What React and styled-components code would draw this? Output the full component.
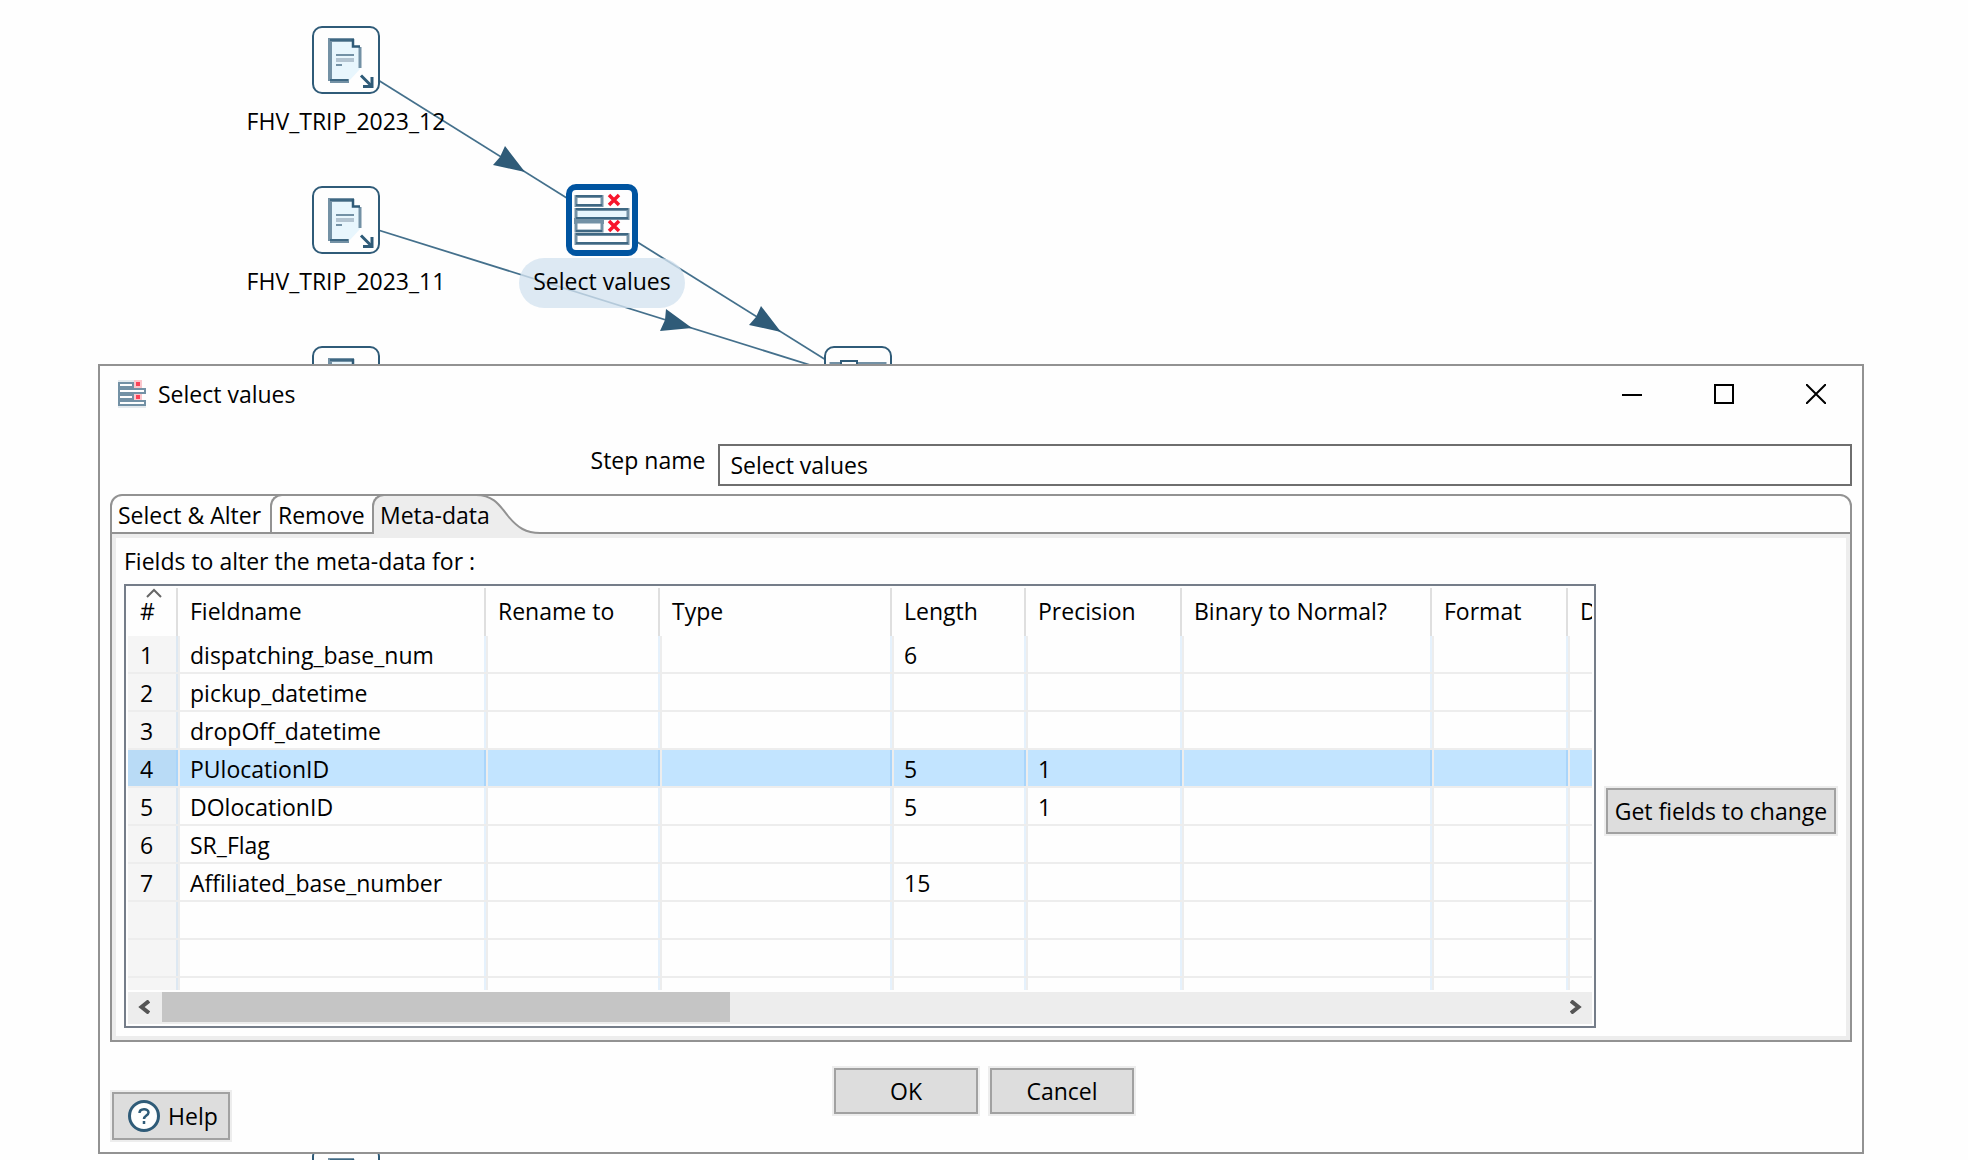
import React, { useState } from "react";
import styled, { createGlobalStyle, css } from "styled-components";

const INK = "#2f5b78";
const STEEL = "#7391a5";
const EDGE = "#929292";
const PANEL = "#ededed";

const GlobalStyle = createGlobalStyle`
  *, *::before, *::after { box-sizing: border-box; }
  html, body { margin: 0; background: #fefefe; }
  body, button, input, table {
    font-family: "Open Sans", "Noto Sans", sans-serif;
    font-size: 23px;
    line-height: 32px;
    color: #000;
  }
`;

/* ---------- transformation canvas ---------- */

const Canvas = styled.main`
  position: relative;
  min-height: 100vh;
  overflow: hidden;
`;

const Hops = styled.svg`
  position: absolute;
  inset: 0;
  width: 100%;
  height: 100%;
`;

const Step = styled.div`
  position: absolute;
  left: ${(p) => p.$x}px;
  top: ${(p) => p.$y}px;
  width: 0;
  display: flex;
  flex-direction: column;
  align-items: center;
`;

const StepTile = styled.div`
  flex: none;
  width: ${(p) => (p.$selected ? 72 : 68)}px;
  height: ${(p) => (p.$selected ? 72 : 68)}px;
  border: ${(p) => (p.$selected ? "6px solid #0054a0" : `2px solid ${INK}`)};
  border-radius: 10px;
  background: #fefefe;
  svg { display: block; }
`;

const StepLabel = styled.span`
  white-space: nowrap;
  margin-top: ${(p) => (p.$selected ? 2 : 11)}px;
  padding: ${(p) => (p.$selected ? "7px 14px 11px" : "0")};
  border-radius: 25px;
  background: ${(p) => (p.$selected ? "rgba(212, 227, 239, 0.78)" : "transparent")};
`;

function FileInputIcon() {
  return (
    <svg width="64" height="64" viewBox="2 2 64 64" aria-hidden="true">
      <path d="M18 14H42V21H48V43L37 55H18Z" fill="#e8f6fd" />
      <path d="M18 13V55" stroke={STEEL} strokeWidth="4" />
      <path d="M48 21V42" stroke={STEEL} strokeWidth="3" />
      <path d="M16 14H42M18 55H37" stroke={STEEL} strokeWidth="4" />
      <path d="M18 14H41M18 54H36" stroke={INK} strokeWidth="1.500" />
      <path d="M41 13V20.500H48" fill="none" stroke={INK} strokeWidth="2.500" />
      <path d="M24 29H42M24 39H30" stroke={STEEL} strokeWidth="2" />
      <path d="M24 34H42" stroke="#b3c4d1" strokeWidth="4" />
      <path d="M49 49.500L59 59.500" stroke={INK} strokeWidth="3" />
      <path d="M60 51V60.500H51" fill="none" stroke={INK} strokeWidth="3" />
    </svg>
  );
}

function SelectValuesIcon() {
  return (
    <svg width="60" height="60" viewBox="6 6 60 60" aria-hidden="true">
      <rect x="8" y="34" width="30" height="6" fill={STEEL} />
      <g fill="#fefefe" stroke={STEEL} strokeWidth="3">
        <rect x="10" y="12.500" width="26" height="9" />
        <rect x="10" y="25.500" width="52" height="9" fill="#e8f6fd" />
        <rect x="10" y="38" width="26" height="9" />
        <rect x="10" y="50.500" width="52" height="9" />
      </g>
      <path d="M10 12H36M10 21H36M10 25H62M10 34H62M10 47H36M10 50H62M10 59H62" stroke={INK} strokeWidth="1.500" />
      <path d="M43 11L53 21M53 11L43 21M43 37L53 47M53 37L43 47" stroke="#f8152c" strokeWidth="3.500" />
    </svg>
  );
}

function SelectValuesSmallIcon() {
  return (
    <svg width="28" height="28" viewBox="0 0 28 28" aria-hidden="true">
      <path d="M0 0H22V2H0ZM0 26H28V28H0Z" fill="#e4eaee" />
      <path d="M0 2H16V8H28V14H16V20H28V26H0Z" fill={STEEL} />
      <path d="M2 4H14V6H2ZM2 10H26V12H2ZM2 16H14V18H2ZM2 22H26V24H2Z" fill="#fefefe" />
      <path d="M16 0H24V8H16ZM16 14H24V20H16Z" fill="#fbc6cc" />
      <path d="M18 2H22V6H18ZM18 15H22V19H18Z" fill="#fb4257" />
    </svg>
  );
}

function MergeIcon() {
  return (
    <svg width="64" height="64" viewBox="2 2 64 64" aria-hidden="true">
      <path d="M7 17.500H61V54H7Z" fill="#fefefe" stroke={STEEL} strokeWidth="3" />
      <path d="M17 15H33V24H17Z" fill="#fefefe" stroke={INK} strokeWidth="2" />
    </svg>
  );
}

function CanvasStep({ x, y, label, selected, children }) {
  return (
    <Step $x={x} $y={y}>
      <StepTile $selected={selected}>{children}</StepTile>
      {label && <StepLabel $selected={selected}>{label}</StepLabel>}
    </Step>
  );
}

/* ---------- dialog ---------- */

const Dialog = styled.section`
  position: absolute;
  left: 98px;
  right: 104px;
  top: 364px;
  border: 2px solid ${EDGE};
  background: #fefefe;
`;

const TitleBar = styled.header`
  display: flex;
  align-items: center;
  height: 56px;
  padding-left: 18px;
`;

const Title = styled.h1`
  flex: 1;
  margin: 0 0 0 12px;
  font-size: inherit;
  font-weight: 400;
`;

const CaptionButton = styled.button`
  display: grid;
  place-items: center;
  width: 92px;
  height: 56px;
  padding: 0;
  border: 0;
  background: none;
`;

const StepNameRow = styled.div`
  display: flex;
  align-items: center;
  margin: 22px 10px 8px 8px;
`;

const StepNameLabel = styled.label`
  flex: 0 0 35%;
  padding: 0 13px 10px 0;
  text-align: right;
`;

const TextInput = styled.input`
  flex: 1;
  min-width: 0;
  height: 42px;
  padding: 0 10px;
  border: 2px solid #6e6e6e;
  border-radius: 0;
  background: #fefefe;
  outline: none;
`;

const TabFolder = styled.div`
  margin: 0 10px;
`;

const TabStrip = styled.div`
  display: flex;
  height: 40px;
  border: 2px solid ${EDGE};
  border-radius: 12px 12px 0 0;
`;

const Tab = styled.button`
  position: relative;
  height: 40px;
  margin-top: -2px;
  padding: 2px 6px 0;
  border: 0 solid ${EDGE};
  background: none;
  text-align: left;
  white-space: nowrap;
  width: ${(p) => p.$width}px;
  & + & {
    border-width: 2px 0 0 2px;
    border-top-left-radius: 12px;
    height: 38px;
  }
  ${(p) =>
    p.$active &&
    css`
      && { height: 40px; padding-bottom: 2px; background: ${PANEL}; }
    `}
`;

const TabText = styled.span`
  position: relative;
`;

const TabCurve = styled.svg`
  position: absolute;
  left: 100%;
  top: -2px;
`;

const TabPanel = styled.div`
  display: flex;
  flex-direction: column;
  border: 2px solid ${EDGE};
  border-top: 0;
  box-shadow: inset 0 0 0 4px ${PANEL};
  padding: 11px 12px 12px;
`;

const PanelCaption = styled.div`
  height: 39px;
`;

const PanelBody = styled.div`
  display: flex;
  align-items: center;
  gap: 8px;
`;

const GridFrame = styled.div`
  flex: 1;
  min-width: 0;
  border: 2px solid #757d89;
  padding: 2px;
`;

const GridViewport = styled.div`
  overflow: hidden;
`;

const Table = styled.table`
  width: 100%;
  table-layout: fixed;
  border-spacing: 0;
`;

const HeadCell = styled.th`
  position: relative;
  height: 48px;
  padding: 0 0 2px 12px;
  border-right: ${(p) => (p.$last ? 0 : 2)}px solid #dfdfdf;
  font-weight: 400;
  text-align: left;
  white-space: nowrap;
  overflow: hidden;
`;

const SortMark = styled.svg`
  position: absolute;
  left: 18px;
  top: 0;
`;

const Cell = styled.td`
  height: ${(p) => (p.$partial ? 12 : 38)}px;
  padding: ${(p) => (p.$partial ? 0 : 2)}px 0 0 ${(p) => (p.$index ? 12 : 10)}px;
  border: 0 solid ${PANEL};
  border-left-width: ${(p) => (p.$index ? 0 : 2)}px;
  border-bottom-width: ${(p) => (p.$partial ? 0 : 2)}px;
  background: ${(p) =>
    p.$selected ? (p.$index ? "#b9dbf6" : "#c2e4ff") : p.$index ? "#f5f5f5" : "#fefefe"};
  box-shadow: ${(p) =>
    p.$last ? "none" : `inset -2px 0 0 ${p.$selected ? "#a9d5fb" : p.$index ? "#dde8f2" : "#e5f1fc"}`};
  white-space: nowrap;
  overflow: hidden;
`;

const ScrollBar = styled.div`
  display: flex;
  height: 32px;
  margin-top: 2px;
  background: ${PANEL};
`;

const ScrollArrow = styled.button`
  display: grid;
  place-items: center;
  width: 34px;
  padding: 0 2px 2px 0;
  border: 0;
  background: none;
  & + div + & { padding: 0 0 2px 2px; }
`;

const ScrollTrack = styled.div`
  flex: 1;
`;

const ScrollThumb = styled.div`
  width: 568px;
  height: 30px;
  background: #c5c5c5;
`;

const PushButton = styled.button`
  display: flex;
  align-items: center;
  justify-content: center;
  gap: 8px;
  height: ${(p) => (p.$tall ? 52 : 50)}px;
  width: ${(p) => p.$width}px;
  padding: ${(p) => (p.$tall ? "0 0 0 4px" : "0")};
  border: 2px solid ${PANEL};
  box-shadow: inset 0 0 0 2px #a1a1a1;
  background: #ddd;
  white-space: nowrap;
`;

const SideColumn = styled.div`
  padding-top: 10px;
`;

const Footer = styled.footer`
  display: grid;
  grid-template-columns: 1fr auto 1fr;
  align-items: start;
  padding: 24px 10px 10px;
`;

const HelpSlot = styled.div`
  padding-top: 24px;
`;

const Actions = styled.div`
  display: flex;
  gap: 8px;
  padding-left: 6px;
`;

const COLUMNS = [
  { title: "#", width: 50 },
  { title: "Fieldname", width: 308 },
  { title: "Rename to", width: 174 },
  { title: "Type", width: 232 },
  { title: "Length", width: 134 },
  { title: "Precision", width: 156 },
  { title: "Binary to Normal?", width: 250 },
  { title: "Format", width: 136 },
  { title: "D" },
];

const FIELDS = [
  { name: "dispatching_base_num", length: "6" },
  { name: "pickup_datetime" },
  { name: "dropOff_datetime" },
  { name: "PUlocationID", length: "5", precision: "1" },
  { name: "DOlocationID", length: "5", precision: "1" },
  { name: "SR_Flag" },
  { name: "Affiliated_base_number", length: "15" },
  {},
  {},
  { partial: true },
];

const TABS = [
  { title: "Select & Alter", width: 158 },
  { title: "Remove", width: 102 },
  { title: "Meta-data", width: 104 },
];

function FieldGrid() {
  const [selected, setSelected] = useState(3);
  return (
    <GridFrame>
      <GridViewport>
        <Table aria-labelledby="grid-caption">
          <colgroup>
            {COLUMNS.map((c) => (
              <col key={c.title} width={c.width} />
            ))}
          </colgroup>
          <thead>
            <tr>
              {COLUMNS.map((c, i) => (
                <HeadCell key={c.title} $last={i === COLUMNS.length - 1}>
                  {i === 0 && (
                    <SortMark width="16" height="10" viewBox="0 0 16 10" aria-hidden="true">
                      <path d="M1 9L8 2L15 9" fill="none" stroke="#666" strokeWidth="2" />
                    </SortMark>
                  )}
                  {c.title}
                </HeadCell>
              ))}
            </tr>
          </thead>
          <tbody>
            {FIELDS.map((f, r) => {
              const values = [f.name ? r + 1 : "", f.name, "", "", f.length, f.precision, "", "", ""];
              return (
                <tr key={r} onClick={() => setSelected(r)}>
                  {values.map((v, i) => (
                    <Cell
                      key={i}
                      $index={i === 0}
                      $last={i === values.length - 1}
                      $partial={f.partial}
                      $selected={selected === r}
                    >
                      {v}
                    </Cell>
                  ))}
                </tr>
              );
            })}
          </tbody>
        </Table>
      </GridViewport>
      <ScrollBar>
        <ScrollArrow aria-label="Scroll left">
          <svg width="12" height="14" viewBox="0 0 12 14">
            <path d="M11 1L3.500 7L11 13" fill="none" stroke="#555" strokeWidth="4" />
          </svg>
        </ScrollArrow>
        <ScrollTrack>
          <ScrollThumb />
        </ScrollTrack>
        <ScrollArrow aria-label="Scroll right">
          <svg width="12" height="14" viewBox="0 0 12 14">
            <path d="M1 1L8.500 7L1 13" fill="none" stroke="#555" strokeWidth="4" />
          </svg>
        </ScrollArrow>
      </ScrollBar>
    </GridFrame>
  );
}

export default function App() {
  const [stepName, setStepName] = useState("Select values");
  return (
    <Canvas>
      <GlobalStyle />
      <Hops aria-hidden="true">
        <g stroke="#44708c" strokeWidth="1.800">
          <path d="M346 60L602 220" />
          <path d="M346 220L858 380" />
          <path d="M602 220L858 380" />
        </g>
        <g fill={INK}>
          <path d="M525 172L505 146L500 157L493 165Z" />
          <path d="M692 328L666 309L665 320L660 331Z" />
          <path d="M781 332L761 306L756 317L749 325Z" />
        </g>
      </Hops>
      <CanvasStep x={346} y={26} label="FHV_TRIP_2023_12"><FileInputIcon /></CanvasStep>
      <CanvasStep x={346} y={186} label="FHV_TRIP_2023_11"><FileInputIcon /></CanvasStep>
      <CanvasStep x={346} y={346}><FileInputIcon /></CanvasStep>
      <CanvasStep x={346} y={1146}><FileInputIcon /></CanvasStep>
      <CanvasStep x={858} y={346}><MergeIcon /></CanvasStep>
      <CanvasStep x={602} y={184} label="Select values" selected><SelectValuesIcon /></CanvasStep>

      <Dialog role="dialog" aria-labelledby="dialog-title">
        <TitleBar>
          <SelectValuesSmallIcon />
          <Title id="dialog-title">Select values</Title>
          <CaptionButton aria-label="Minimize">
            <svg width="20" height="20"><path d="M0 11H20" stroke="#000" strokeWidth="2" /></svg>
          </CaptionButton>
          <CaptionButton aria-label="Maximize">
            <svg width="20" height="20"><rect x="1" y="1" width="18" height="18" fill="none" stroke="#000" strokeWidth="2" /></svg>
          </CaptionButton>
          <CaptionButton aria-label="Close">
            <svg width="20" height="20"><path d="M0 0L20 20M20 0L0 20" stroke="#000" strokeWidth="2" /></svg>
          </CaptionButton>
        </TitleBar>

        <StepNameRow>
          <StepNameLabel htmlFor="step-name">Step name</StepNameLabel>
          <TextInput id="step-name" value={stepName} onChange={(e) => setStepName(e.target.value)} />
        </StepNameRow>

        <TabFolder>
          <TabStrip role="tablist">
            {TABS.map((t, i) => (
              <Tab key={t.title} role="tab" aria-selected={i === 2} $active={i === 2} $width={t.width}>
                {i === 2 && (
                  <TabCurve width="64" height="40" viewBox="0 0 64 40" aria-hidden="true">
                    <path d="M0 1C18 1 24 12 32 22C42 34 50 39 64 39V40H0Z" fill={PANEL} />
                    <path d="M0 0H64V2H0Z" fill={EDGE} />
                    <path d="M0 1C18 1 24 12 32 22C42 34 50 39 64 39" fill="none" stroke={EDGE} strokeWidth="2" />
                  </TabCurve>
                )}
                <TabText>{t.title}</TabText>
              </Tab>
            ))}
          </TabStrip>
          <TabPanel role="tabpanel">
            <PanelCaption id="grid-caption">Fields to alter the meta-data for :</PanelCaption>
            <PanelBody>
              <FieldGrid />
              <SideColumn>
                <PushButton $width={234}>Get fields to change</PushButton>
              </SideColumn>
            </PanelBody>
          </TabPanel>
        </TabFolder>

        <Footer>
          <HelpSlot>
            <PushButton $width={122} $tall>
              <svg width="32" height="32" viewBox="0 0 32 32" aria-hidden="true">
                <circle cx="16" cy="16" r="14.500" fill="#fefefe" stroke={INK} strokeWidth="3" />
                <path d="M11.500 13C11.500 8 20.500 8 20.500 12.500C20.500 15.500 16 15.500 16 19M16 21V24" fill="none" stroke={INK} strokeWidth="2.500" />
              </svg>
              Help
            </PushButton>
          </HelpSlot>
          <Actions>
            <PushButton $width={148}>OK</PushButton>
            <PushButton $width={148}>Cancel</PushButton>
          </Actions>
        </Footer>
      </Dialog>
    </Canvas>
  );
}
